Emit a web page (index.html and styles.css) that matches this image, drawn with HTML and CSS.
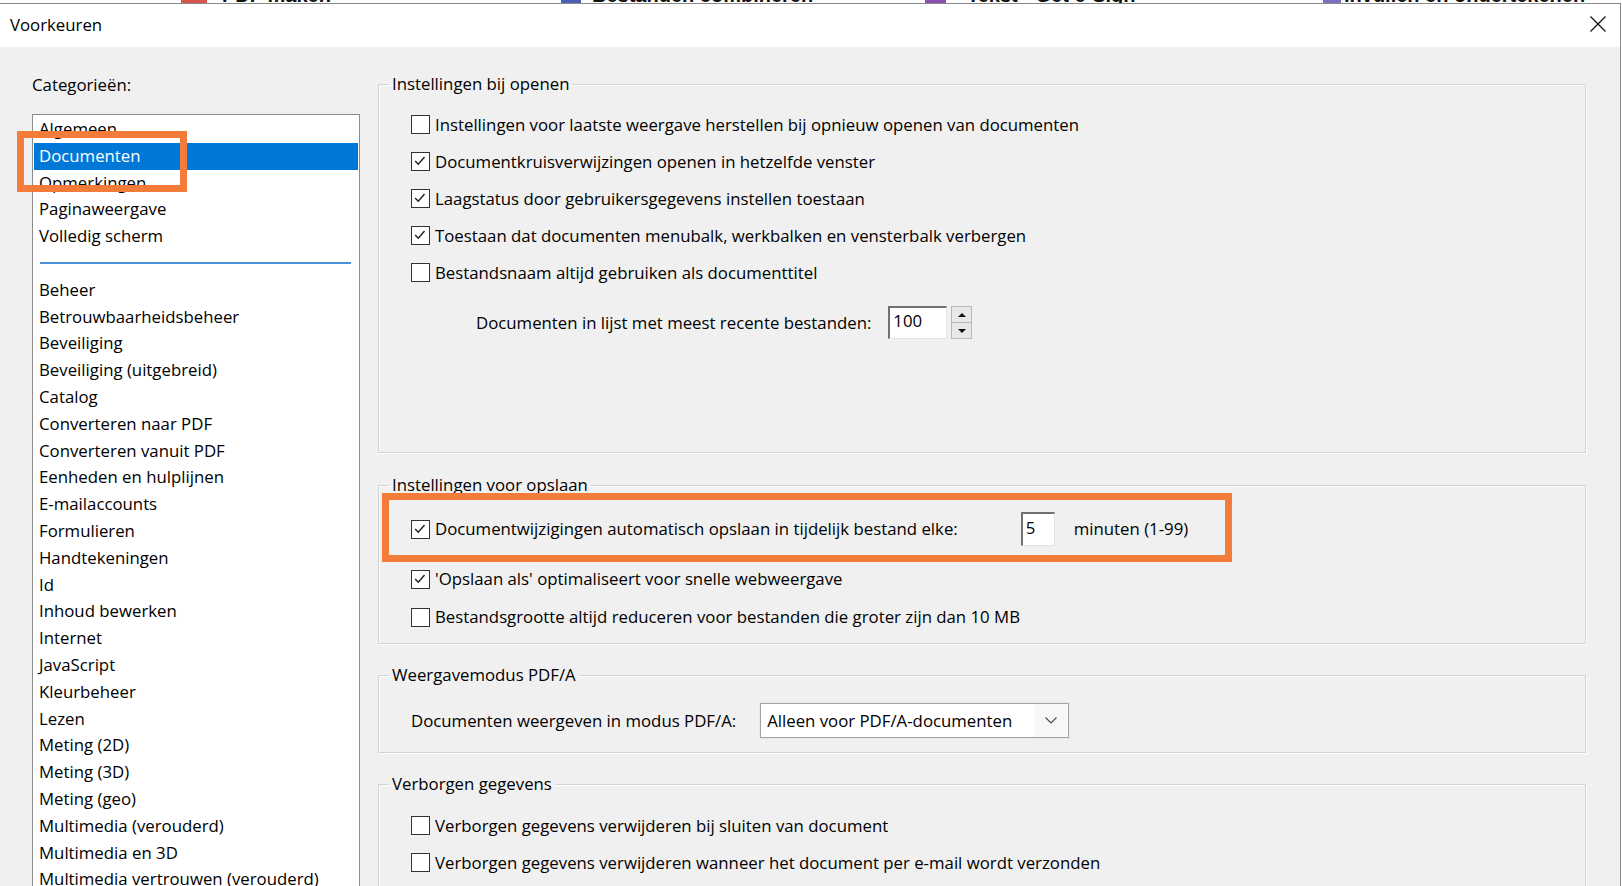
FILE: index.html
```html
<!DOCTYPE html>
<html lang="nl">
<head>
<meta charset="utf-8">
<title>Voorkeuren</title>
<link rel="stylesheet" href="styles.css">
</head>
<body>
<div class="strip">
  <span class="bg-icon bg-red"></span><span class="bg-text bt1">PDF maken</span>
  <span class="bg-icon bg-blue"></span><span class="bg-text bt2">Bestanden combineren</span>
  <span class="bg-icon bg-purple"></span><span class="bg-text bt3">Tekst - Get e-Sign</span>
  <span class="bg-icon bg-purple2"></span><span class="bg-text bt4">Invullen en ondertekenen</span>
</div>
<div class="dialog">
  <div class="titlebar">
    <span class="title">Voorkeuren</span>
    <svg class="close" viewBox="0 0 16 16" width="16" height="16"><path d="M0.5 0.5 L15.5 15.5 M15.5 0.5 L0.5 15.5" stroke="#111" stroke-width="1.3" fill="none"/></svg>
  </div>
  <div class="body">
    <div class="cats">
      <div class="cats-label">Categorieën:</div>
      <div class="listbox">
        <div class="item">Algemeen</div>
        <div class="item selected">Documenten<span class="mark mark-cat"></span></div>
        <div class="item">Opmerkingen</div>
        <div class="item">Paginaweergave</div>
        <div class="item">Volledig scherm</div>
        <div class="sep"></div>
        <div class="item">Beheer</div>
        <div class="item">Betrouwbaarheidsbeheer</div>
        <div class="item">Beveiliging</div>
        <div class="item">Beveiliging (uitgebreid)</div>
        <div class="item">Catalog</div>
        <div class="item">Converteren naar PDF</div>
        <div class="item">Converteren vanuit PDF</div>
        <div class="item">Eenheden en hulplijnen</div>
        <div class="item">E-mailaccounts</div>
        <div class="item">Formulieren</div>
        <div class="item">Handtekeningen</div>
        <div class="item">Id</div>
        <div class="item">Inhoud bewerken</div>
        <div class="item">Internet</div>
        <div class="item">JavaScript</div>
        <div class="item">Kleurbeheer</div>
        <div class="item">Lezen</div>
        <div class="item">Meting (2D)</div>
        <div class="item">Meting (3D)</div>
        <div class="item">Meting (geo)</div>
        <div class="item">Multimedia (verouderd)</div>
        <div class="item">Multimedia en 3D</div>
        <div class="item">Multimedia vertrouwen (verouderd)</div>
        <div class="item">Oproepen</div>
      </div>
    </div>
    <div class="panel">
      <fieldset class="group g1">
        <legend>Instellingen bij openen</legend>
        <div class="content c1">
          <div class="cb-row"><span class="cb"></span><span class="lbl">Instellingen voor laatste weergave herstellen bij opnieuw openen van documenten</span></div>
          <div class="cb-row"><span class="cb"><svg viewBox="0 0 19 19" width="17" height="17"><polyline points="3.5,9 7,12.5 14,4.5" fill="none" stroke="#222" stroke-width="1.6"/></svg></span><span class="lbl">Documentkruisverwijzingen openen in hetzelfde venster</span></div>
          <div class="cb-row"><span class="cb"><svg viewBox="0 0 19 19" width="17" height="17"><polyline points="3.5,9 7,12.5 14,4.5" fill="none" stroke="#222" stroke-width="1.6"/></svg></span><span class="lbl">Laagstatus door gebruikersgegevens instellen toestaan</span></div>
          <div class="cb-row"><span class="cb"><svg viewBox="0 0 19 19" width="17" height="17"><polyline points="3.5,9 7,12.5 14,4.5" fill="none" stroke="#222" stroke-width="1.6"/></svg></span><span class="lbl">Toestaan dat documenten menubalk, werkbalken en vensterbalk verbergen</span></div>
          <div class="cb-row"><span class="cb"></span><span class="lbl">Bestandsnaam altijd gebruiken als documenttitel</span></div>
          <div class="recent-row">
            <span class="lbl">Documenten in lijst met meest recente bestanden:</span>
            <span class="field field-recent">100</span>
            <span class="spin"><span class="spin-btn"><span class="tri-up"></span></span><span class="spin-btn"><span class="tri-down"></span></span></span>
          </div>
        </div>
      </fieldset>

      <fieldset class="group g2">
        <legend>Instellingen voor opslaan</legend>
        <div class="content c2">
          <div class="save-row">
            <span class="mark mark-save"></span>
            <span class="cb"><svg viewBox="0 0 19 19" width="17" height="17"><polyline points="3.5,9 7,12.5 14,4.5" fill="none" stroke="#222" stroke-width="1.6"/></svg></span><span class="lbl">Documentwijzigingen automatisch opslaan in tijdelijk bestand elke:</span>
            <span class="field field-min">5</span>
            <span class="lbl unit">minuten (1-99)</span>
          </div>
          <div class="cb-row tall after-save"><span class="cb"><svg viewBox="0 0 19 19" width="17" height="17"><polyline points="3.5,9 7,12.5 14,4.5" fill="none" stroke="#222" stroke-width="1.6"/></svg></span><span class="lbl">'Opslaan als' optimaliseert voor snelle webweergave</span></div>
          <div class="cb-row tall"><span class="cb"></span><span class="lbl">Bestandsgrootte altijd reduceren voor bestanden die groter zijn dan 10 MB</span></div>
        </div>
      </fieldset>

      <fieldset class="group g3">
        <legend>Weergavemodus PDF/A</legend>
        <div class="content c3">
          <div class="pdfa-row">
            <span class="lbl">Documenten weergeven in modus PDF/A:</span>
            <span class="select"><span class="select-text">Alleen voor PDF/A-documenten</span><span class="select-arrow"><svg viewBox="0 0 12 7" width="12" height="7"><polyline points="0.5,0.5 6,6 11.5,0.5" fill="none" stroke="#444" stroke-width="1.1"/></svg></span></span>
          </div>
        </div>
      </fieldset>

      <fieldset class="group g4">
        <legend>Verborgen gegevens</legend>
        <div class="content c4">
          <div class="cb-row"><span class="cb"></span><span class="lbl">Verborgen gegevens verwijderen bij sluiten van document</span></div>
          <div class="cb-row"><span class="cb"></span><span class="lbl">Verborgen gegevens verwijderen wanneer het document per e-mail wordt verzonden</span></div>
        </div>
      </fieldset>
    </div>
  </div>
</div>
</body>
</html>
```

FILE: styles.css
```css
html, body {
  margin: 0;
  padding: 0;
  overflow: hidden;
  background: #ffffff;
}
body {
  width: 1622px;
  height: 886px;
  font-family: "Open Sans", "Noto Sans", "DejaVu Sans", sans-serif;
  font-size: 16.8px;
  color: #000;
}

/* clipped background window behind the dialog */
.strip {
  height: 3px;
  overflow: hidden;
  display: flex;
  align-items: flex-start;
  background: #fff;
}
.bg-text {
  flex: none;
  font-family: "Liberation Sans", Arial, sans-serif;
  font-weight: bold;
  font-size: 20px;
  line-height: 20px;
  margin-top: -15px;
  white-space: nowrap;
  color: #111;
}
.bg-icon {
  flex: none;
  height: 3px;
}
.bg-red { margin-left: 181px; width: 26px; background: #d9534f; }
.bt1 { margin-left: 15px; width: 339px; }
.bg-blue { width: 20px; background: #4a5fb5; }
.bt2 { margin-left: 11px; width: 333px; }
.bg-purple { width: 21px; background: #8a4fb0; }
.bt3 { margin-left: 21px; width: 356px; }
.bg-purple2 { width: 18px; background: #7a6fc0; }
.bt4 { margin-left: 3px; width: 230px; }

.dialog {
  width: 1621px;
  height: 883px;
  box-sizing: border-box;
  border-top: 1px solid #8a8a8a;
  border-right: 1px solid #8a8a8a;
  display: flex;
  flex-direction: column;
}
.titlebar {
  flex: none;
  height: 43px;
  background: #fff;
  display: flex;
  align-items: center;
  justify-content: space-between;
  padding: 0 14px 0 10px;
}
.title {
  line-height: 22px;
  margin-top: -1px;
}
.close {
  display: block;
  margin-top: -4px;
}

.body {
  flex: 1;
  background: #f0f0f0;
  display: flex;
  gap: 18px;
  padding: 27px 34px 0 32px;
  overflow: hidden;
}

/* categories */
.cats {
  flex: none;
  width: 328px;
  display: flex;
  flex-direction: column;
}
.cats-label {
  line-height: 22px;
  margin-bottom: 18px;
}
.listbox {
  background: #fff;
  border: 1px solid #8c8c8c;
  padding: 1px;
  flex: 1;
}
.item {
  position: relative;
  height: 26.8px;
  line-height: 26.8px;
  padding-left: 5px;
  white-space: nowrap;
}
.item.selected {
  background: #0078d7;
  color: #fff;
}
.sep {
  height: 26.8px;
  display: flex;
  align-items: center;
  padding: 0 7px 0 6px;
}
.sep::before {
  content: "";
  flex: 1;
  height: 2px;
  background: #4b91d5;
}

/* orange annotation frames */
.mark {
  position: absolute;
  box-sizing: border-box;
  border: 7px solid #f47c3a;
  z-index: 2;
  pointer-events: none;
}
.mark-cat {
  left: -17px;
  top: -12px;
  width: 170px;
  height: 61px;
}
.mark-save {
  left: -29px;
  top: -19px;
  width: 850px;
  height: 69px;
}

/* groups */
.panel {
  flex: 1;
  display: flex;
  flex-direction: column;
  margin-top: -1px;
}
.group {
  margin: 0;
  padding: 0;
  min-width: 0;
  border: 1px solid #d4d4d4;
  box-shadow: inset 1px 1px 0 #fbfbfb, 1px 1px 0 #fbfbfb;
}
.group legend {
  margin-left: 10px;
  padding: 0 3px;
  line-height: 22px;
}
.content {
  padding-left: 32px;
}
.c1 { padding-top: 11px; padding-bottom: 113px; }
.g2 { margin-top: 21px; }
.c2 { padding-top: 16px; padding-bottom: 7px; }
.g3 { margin-top: 20px; }
.c3 { padding-top: 17px; padding-bottom: 14px; }
.g4 { margin-top: 20px; }
.c4 { padding-top: 12px; padding-bottom: 40px; }

.cb-row {
  height: 37px;
  display: flex;
  align-items: center;
  gap: 5px;
  white-space: nowrap;
}
.cb-row.tall { height: 38px; }
.cb-row.after-save { margin-top: 14px; }
.cb {
  flex: none;
  width: 19px;
  height: 19px;
  box-sizing: border-box;
  border: 1px solid #333;
  background: #fff;
  display: flex;
  align-items: center;
  justify-content: center;
}
.cb svg { display: block; }
.lbl {
  line-height: 22px;
  white-space: nowrap;
}

.recent-row {
  margin-top: 15px;
  height: 33px;
  display: flex;
  align-items: center;
  padding-left: 65px;
}
.field {
  flex: none;
  box-sizing: border-box;
  background: #fff;
  border-top: 2px solid #707070;
  border-left: 2px solid #707070;
  border-right: 1px solid #e3e3e3;
  border-bottom: 1px solid #e3e3e3;
  line-height: 26px;
  padding-left: 3px;
}
.field-recent {
  width: 59px;
  height: 33px;
  margin-left: 17px;
}
.spin {
  flex: none;
  width: 21px;
  height: 33px;
  margin-left: 4px;
  display: flex;
  flex-direction: column;
}
.spin-btn {
  flex: 1;
  box-sizing: border-box;
  border: 1px solid #b9b9b9;
  background: #e8e8e8;
  display: flex;
  align-items: center;
  justify-content: center;
}
.spin-btn + .spin-btn { border-top: none; }
.tri-up {
  width: 0; height: 0;
  border-left: 4px solid transparent;
  border-right: 4px solid transparent;
  border-bottom: 4px solid #111;
}
.tri-down {
  width: 0; height: 0;
  border-left: 4px solid transparent;
  border-right: 4px solid transparent;
  border-top: 4px solid #111;
}

.save-row {
  position: relative;
  height: 34px;
  display: flex;
  align-items: center;
  gap: 5px;
  white-space: nowrap;
}
.field-min {
  width: 34px;
  height: 34px;
  margin-left: 58px;
  line-height: 28px;
}
.unit { margin-left: 14px; }

.pdfa-row {
  height: 35px;
  display: flex;
  align-items: center;
}
.select {
  flex: none;
  margin-left: 24px;
  width: 309px;
  height: 35px;
  box-sizing: border-box;
  border: 1px solid #a3a3a3;
  background: #fff;
  display: flex;
  align-items: center;
  box-shadow: 0 0 0 1px #e9e9e9;
}
.select-text {
  flex: 1;
  padding-left: 6px;
  line-height: 22px;
  white-space: nowrap;
}
.select-arrow {
  flex: none;
  width: 34px;
  height: 100%;
  display: flex;
  align-items: center;
  justify-content: center;
  background: #f7f7f7;
}
.select-arrow svg { display: block; }
```
